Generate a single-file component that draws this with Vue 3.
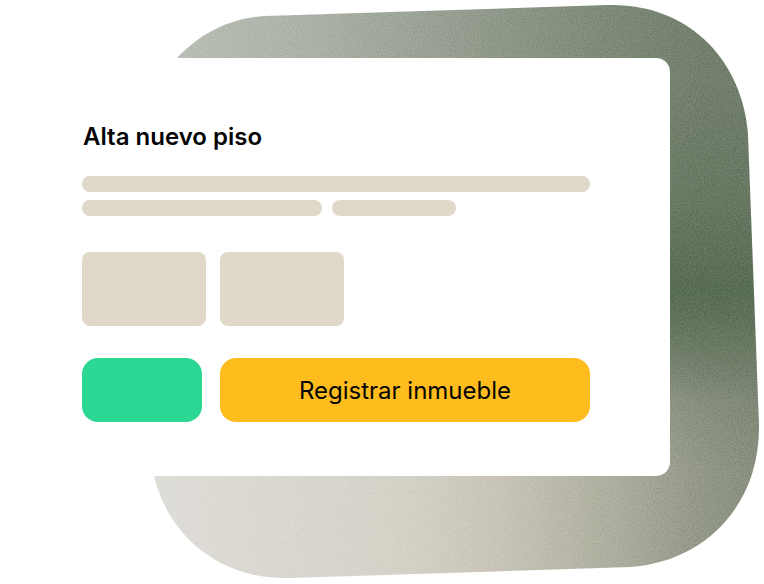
<script setup>
const bars = [{ w: 240 }, { w: 124 }]
const tiles = [0, 1]
const shape = 'M265 16 L608 5 C690 3 743 62 748 135 L759 425 C760 505 705 562 630 567 L290 578 C215 580 162 530 152 465 L138 160 C138 85 192 20 265 16 Z'
</script>

<template>
  <div class="stage">
    <svg class="blob" width="764" height="584" viewBox="0 0 764 584" aria-hidden="true">
      <defs>
        <linearGradient id="top" gradientUnits="userSpaceOnUse" x1="180" y1="0" x2="760" y2="0">
          <stop offset="0" stop-color="#b7bcb1" />
          <stop offset="0.21" stop-color="#a9b0a5" />
          <stop offset="0.41" stop-color="#98a093" />
          <stop offset="0.55" stop-color="#8b9585" />
          <stop offset="0.72" stop-color="#7c8875" />
          <stop offset="0.9" stop-color="#6e7c68" />
          <stop offset="1" stop-color="#6d7b67" />
        </linearGradient>
        <linearGradient id="bottom" gradientUnits="userSpaceOnUse" x1="150" y1="0" x2="760" y2="0">
          <stop offset="0" stop-color="#dedcd7" />
          <stop offset="0.41" stop-color="#d3d0c5" />
          <stop offset="0.57" stop-color="#c6c3b5" />
          <stop offset="0.77" stop-color="#a9aa9a" />
          <stop offset="0.9" stop-color="#909586" />
          <stop offset="1" stop-color="#848b7a" />
        </linearGradient>
        <linearGradient id="fade" gradientUnits="userSpaceOnUse" x1="0" y1="300" x2="0" y2="470">
          <stop offset="0" stop-color="#000" />
          <stop offset="1" stop-color="#fff" />
        </linearGradient>
        <mask id="fadeMask" maskUnits="userSpaceOnUse" x="0" y="0" width="764" height="584">
          <rect width="764" height="584" fill="url(#fade)" />
        </mask>
        <linearGradient id="band" gradientUnits="userSpaceOnUse" x1="0" y1="80" x2="0" y2="400">
          <stop offset="0" stop-color="#54684f" stop-opacity="0" />
          <stop offset="0.38" stop-color="#54684f" stop-opacity="0.4" />
          <stop offset="0.66" stop-color="#54684f" stop-opacity="1" />
          <stop offset="0.78" stop-color="#54684f" stop-opacity="0.6" />
          <stop offset="1" stop-color="#54684f" stop-opacity="0" />
        </linearGradient>
        <filter id="grain" x="0" y="0" width="100%" height="100%" color-interpolation-filters="sRGB">
          <feTurbulence type="fractalNoise" baseFrequency="0.85" numOctaves="2" seed="4" />
          <feColorMatrix type="matrix" values="1.2 0 0 0 0  1.2 0 0 0 0  1.2 0 0 0 0  0 0 0 0 0.35" />
        </filter>
        <clipPath id="shapeClip"><path :d="shape" /></clipPath>
      </defs>
      <g class="painted" clip-path="url(#shapeClip)">
        <rect width="764" height="584" fill="url(#top)" />
        <rect width="764" height="584" fill="url(#bottom)" mask="url(#fadeMask)" />
        <rect x="600" y="80" width="164" height="320" fill="url(#band)" />
        <rect class="grain" width="764" height="584" filter="url(#grain)" />
      </g>
    </svg>

    <section class="card">
      <h1 class="title">Alta nuevo piso</h1>
      <div class="lines">
        <div class="bar bar-full"></div>
        <div class="bar-row">
          <div v-for="b in bars" :key="b.w" class="bar" :style="{ width: b.w + 'px' }"></div>
        </div>
      </div>
      <div class="tiles">
        <div v-for="t in tiles" :key="t" class="tile"></div>
      </div>
      <div class="actions">
        <div class="btn-green"></div>
        <div class="btn-yellow">Registrar inmueble</div>
      </div>
    </section>
  </div>
</template>

<style>
html, body { background: #ffffff; }
</style>

<style scoped>
.stage {
  position: relative;
  width: 764px;
  height: 584px;
  overflow: hidden;
  padding-top: 58.4px;
  box-sizing: border-box;
  font-family: Inter, "Liberation Sans", sans-serif;
  color: #050505;
}
.blob {
  position: absolute;
  left: 0;
  top: 0;
}
.painted {
  isolation: isolate;
}
.grain {
  mix-blend-mode: soft-light;
}
.card {
  position: relative;
  box-sizing: border-box;
  width: 670px;
  height: 418px;
  background: #ffffff;
  border-radius: 14px;
  padding: 64px 80px 0 82px;
  display: flex;
  flex-direction: column;
}
.title {
  margin: 0 0 0 1px;
  font-size: 24px;
  line-height: 30px;
  font-weight: 600;
}
.lines {
  margin-top: 24px;
  display: flex;
  flex-direction: column;
  gap: 8px;
}
.bar {
  height: 16px;
  border-radius: 8px;
  background: #e0d9c9;
}
.bar-row {
  display: flex;
  gap: 10px;
}
.tiles {
  margin-top: 36px;
  display: flex;
  gap: 14px;
}
.tile {
  width: 124px;
  height: 74px;
  border-radius: 8px;
  background: #e0d9c9;
}
.actions {
  margin-top: 32px;
  display: flex;
  gap: 18px;
}
.btn-green {
  width: 120px;
  height: 64px;
  border-radius: 16px;
  background: #2cd793;
}
.btn-yellow {
  flex: 1;
  height: 64px;
  border-radius: 16px;
  background: #febc1d;
  display: flex;
  align-items: center;
  justify-content: center;
  font-size: 24px;
  font-weight: 400;
}
</style>
